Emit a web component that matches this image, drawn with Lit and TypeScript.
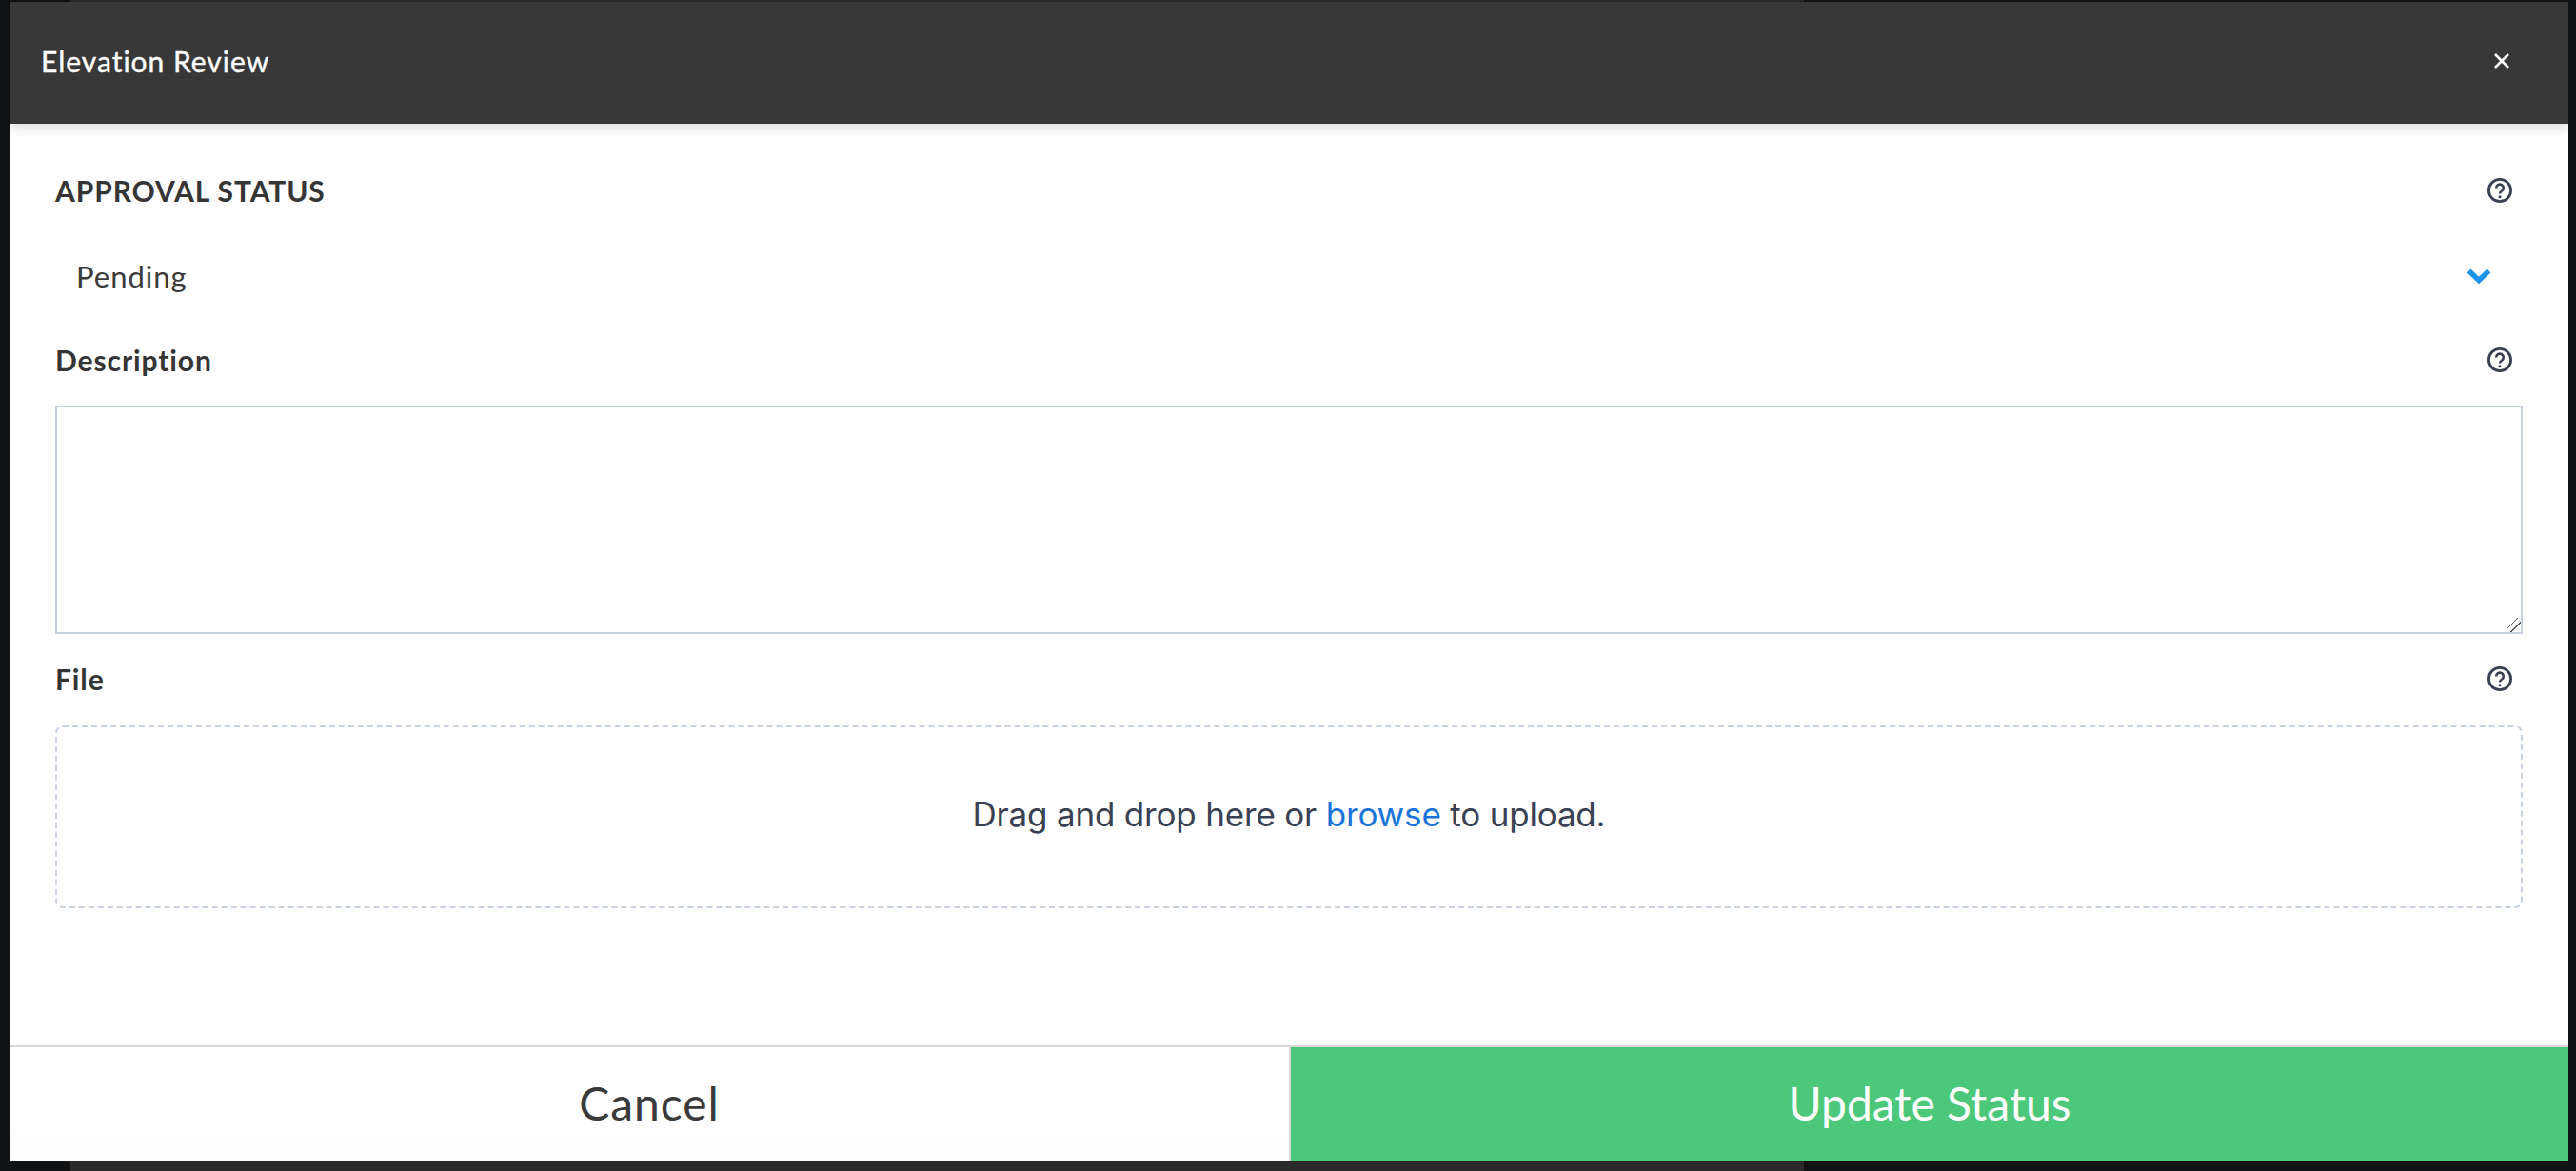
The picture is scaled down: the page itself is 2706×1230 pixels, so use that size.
import { LitElement, html, css, svg } from "lit";
import { customElement } from "lit/decorators.js";

const helpIcon = svg`
  <circle cx="13" cy="13" r="11.6" fill="none" stroke="currentColor" stroke-width="2.8"></circle>
  <path d="M9.2 10.4a3.8 3.8 0 1 1 6 3.1c-1.4.9-2.2 1.4-2.2 2.9" fill="none" stroke="currentColor" stroke-width="2.6"></path>
  <circle cx="13" cy="19.8" r="1.5" fill="currentColor"></circle>
`;

@customElement("app-root")
export class AppRoot extends LitElement {
  static styles = css`
    :host {
      display: block;
      height: 1230px;
      overflow: hidden;
      box-sizing: border-box;
      padding: 2px 8px 10px 10px;
      font-family: Lato, "Open Sans", sans-serif;
      background: linear-gradient(
        to right,
        #111214 74px,
        #2a2a2a 74px,
        #2a2a2a 1895px,
        #111214 1895px
      );
    }

    .modal {
      height: 100%;
      display: flex;
      flex-direction: column;
      background: #fff;
    }

    .header {
      flex: none;
      height: 128px;
      display: flex;
      align-items: center;
      justify-content: space-between;
      padding: 0 62px 4px 33px;
      box-sizing: border-box;
      background: #383838;
      box-shadow: 0 4px 12px rgba(0, 0, 0, 0.14);
      color: #fff;
      font-size: 30px;
      letter-spacing: 1px;
      -webkit-text-stroke: 0.4px #fff;
      position: relative;
    }

    .close {
      width: 16px;
      height: 16px;
      display: block;
    }

    .body {
      flex: 1;
      padding: 52px 48px 0 48px;
    }

    .label-row {
      height: 36px;
      display: flex;
      align-items: center;
      justify-content: space-between;
      padding-right: 11px;
      color: #353535;
      font-size: 30px;
      font-weight: 700;
      letter-spacing: 0.9px;
    }

    .help {
      width: 26px;
      height: 26px;
      color: #3a4152;
      display: block;
    }

    .select {
      height: 72px;
      margin: 36px 0 34px;
      display: flex;
      align-items: center;
      justify-content: space-between;
      padding: 0 32px 0 22px;
      color: #3a3a3a;
      font-size: 31px;
      letter-spacing: 1px;
    }

    .chevron {
      width: 28px;
      height: 18px;
      display: block;
    }

    textarea {
      display: block;
      box-sizing: border-box;
      width: 100%;
      height: 240px;
      margin: 30px 0 29px;
      border: 2px solid #c5d0e1;
      border-radius: 0;
      background: #fff;
      outline: none;
    }

    textarea::-webkit-resizer {
      background: linear-gradient(
        135deg,
        transparent 37%,
        #555 37%,
        #555 43%,
        transparent 43%,
        transparent 63%,
        #555 63%,
        #555 69%,
        transparent 69%
      );
    }

    .dropzone {
      box-sizing: border-box;
      height: 192px;
      margin-top: 31px;
      padding-bottom: 6px;
      display: flex;
      align-items: center;
      justify-content: center;
      border: 2px dashed #c8d2e3;
      border-radius: 8px;
      color: #3a4152;
      font-family: Inter, sans-serif;
      font-size: 35px;
      letter-spacing: -0.18px;
    }

    .dropzone a {
      color: #1a73d9;
      text-decoration: none;
      white-space: pre;
    }

    .footer {
      flex: none;
      height: 122px;
      box-sizing: border-box;
      display: grid;
      grid-template-columns: 1346px 1fr;
      border-top: 2px solid #d8d8d8;
    }

    .footer button {
      border: none;
      padding: 0 0 3px;
      font-family: inherit;
      font-size: 48px;
      font-weight: 400;
    }

    .footer .cancel {
      background: linear-gradient(#fff 70%, #fcfcfc);
      color: #3a3a3a;
      border-right: 2px solid #d8d8d8;
      letter-spacing: 0.9px;
    }

    .update {
      background: #4cc87a;
      color: #fff;
    }
  `;

  private helpSvg() {
    return html`<svg class="help" viewBox="0 0 26 26">${helpIcon}</svg>`;
  }

  render() {
    return html`
      <div class="modal">
        <div class="header">
          <span>Elevation Review</span>
          <svg class="close" viewBox="0 0 16 16">
            <path d="M1 1l14 14M15 1L1 15" stroke="#fff" stroke-width="2.6" fill="none"></path>
          </svg>
        </div>
        <div class="body">
          <div class="label-row"><span>APPROVAL STATUS</span>${this.helpSvg()}</div>
          <div class="select">
            <span>Pending</span>
            <svg class="chevron" viewBox="0 0 28 18">
              <path d="M3.5 3.5L14 13.5L24.5 3.5" stroke="#1a94ea" stroke-width="5.5" fill="none"></path>
            </svg>
          </div>
          <div class="label-row"><span>Description</span>${this.helpSvg()}</div>
          <textarea></textarea>
          <div class="label-row"><span>File</span>${this.helpSvg()}</div>
          <div class="dropzone">
            <span>Drag and drop here or <a>browse</a> to upload.</span>
          </div>
        </div>
        <div class="footer">
          <button class="cancel">Cancel</button>
          <button class="update">Update Status</button>
        </div>
      </div>
    `;
  }
}
